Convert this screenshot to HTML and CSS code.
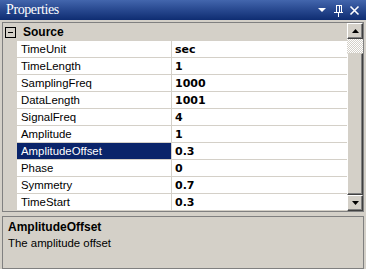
FILE: index.html
```html
<!DOCTYPE html>
<html>
<head>
<meta charset="utf-8">
<link rel="stylesheet" href="styles.css">
</head>
<body>
<div class="window">
  <div class="titlebar">
    <span class="title">Properties</span>
    <div class="tools">
      <svg class="ico" width="10" height="16" viewBox="0 0 10 16"><polygon points="1,6 9,6 5,10" fill="#fff"/></svg>
      <svg class="ico" width="10" height="16" viewBox="0 0 10 16"><path d="M3 3h5M3 3v7M6 3v7M8 3v7M1 10h9M5 10v5" stroke="#fff" stroke-width="1" fill="none" shape-rendering="crispEdges"/></svg>
      <svg class="ico" width="12" height="16" viewBox="0 0 12 16"><path d="M1.5 4.5l8 8M9.5 4.5l-8 8" stroke="#fff" stroke-width="1.6" fill="none"/></svg>
    </div>
  </div>
  <div class="grid">
    <div class="rows">
      <div class="cat">
        <span class="box"><span class="minus"></span></span>
        <span class="catname">Source</span>
      </div>
      <div class="row"><div class="gut"></div><div class="name">TimeUnit</div><div class="val">sec</div></div>
      <div class="row"><div class="gut"></div><div class="name">TimeLength</div><div class="val">1</div></div>
      <div class="row"><div class="gut"></div><div class="name">SamplingFreq</div><div class="val">1000</div></div>
      <div class="row"><div class="gut"></div><div class="name">DataLength</div><div class="val">1001</div></div>
      <div class="row"><div class="gut"></div><div class="name">SignalFreq</div><div class="val">4</div></div>
      <div class="row"><div class="gut"></div><div class="name">Amplitude</div><div class="val">1</div></div>
      <div class="row"><div class="gut"></div><div class="name sel">AmplitudeOffset</div><div class="val">0.3</div></div>
      <div class="row"><div class="gut"></div><div class="name">Phase</div><div class="val">0</div></div>
      <div class="row"><div class="gut"></div><div class="name">Symmetry</div><div class="val">0.7</div></div>
      <div class="row"><div class="gut"></div><div class="name">TimeStart</div><div class="val">0.3</div></div>
    </div>
    <div class="scroll">
      <div class="btn"><svg width="7" height="4" viewBox="0 0 7 4"><polygon points="3.5,0 7,4 0,4" fill="#000"/></svg></div>
      <div class="track"></div>
      <div class="thumb"></div>
      <div class="btn"><svg width="7" height="4" viewBox="0 0 7 4"><polygon points="0,0 7,0 3.5,4" fill="#000"/></svg></div>
    </div>
  </div>
  <div class="desc">
    <div class="dtitle">AmplitudeOffset</div>
    <div class="dtext">The amplitude offset</div>
  </div>
</div>
</body>
</html>
```
FILE: styles.css
```css
html, body {
  margin: 0;
  padding: 0;
  background: #d4d0c8;
}
.window {
  width: 366px;
  height: 269px;
  background: #d4d0c8;
  font-family: "Liberation Sans", Arial, sans-serif;
  font-size: 11.4px;
  color: #000;
  overflow: hidden;
}
.titlebar {
  height: 20px;
  display: flex;
  align-items: center;
  justify-content: space-between;
  background: linear-gradient(to bottom, #4366ad 0%, #2a4b92 45%, #0f2d72 100%);
  padding: 0 5px 0 6px;
}
.title {
  font-family: "Liberation Serif", "Times New Roman", serif;
  font-size: 14px;
  color: #fff;
  letter-spacing: -0.4px;
  line-height: 20px;
}
.tools {
  display: flex;
  align-items: center;
  gap: 6px;
}
.ico { display: block; }
.grid {
  margin: 2px 2px 0 2px;
  height: 188px;
  border: 1px solid #808080;
  display: flex;
  background: #d4d0c8;
}
.rows {
  flex: 1;
  display: flex;
  flex-direction: column;
}
.cat {
  height: 18px;
  display: flex;
  align-items: center;
  background: #d4d0c8;
}
.box {
  width: 9px;
  height: 9px;
  border: 1px solid #000;
  margin-left: 2px;
  margin-right: 7px;
  display: flex;
  align-items: center;
  justify-content: center;
  background: #d4d0c8;
}
.minus {
  width: 5px;
  height: 1px;
  background: #000;
}
.catname {
  font-weight: bold;
  font-size: 12px;
}
.row {
  height: 17px;
  display: flex;
}
.gut {
  width: 14px;
  background: #d4d0c8;
}
.name {
  width: 150px;
  padding-left: 4px;
  background: #fff;
  border-bottom: 1px solid #d4d0c8;
  border-right: 1px solid #d4d0c8;
  line-height: 17px;
  white-space: nowrap;
  overflow: hidden;
}
.name.sel {
  background: #0a246a;
  color: #fff;
}
.val {
  flex: 1;
  padding-left: 3px;
  background: #fff;
  border-bottom: 1px solid #d4d0c8;
  line-height: 17px;
  font-family: "DejaVu Sans", sans-serif;
  font-weight: bold;
  font-size: 11px;
}
.scroll {
  width: 16px;
  display: flex;
  flex-direction: column;
  background: #d4d0c8;
}
.btn {
  height: 16px;
  box-sizing: border-box;
  border: 1px solid;
  border-color: #fff #404040 #404040 #fff;
  box-shadow: inset -1px -1px 0 #808080;
  background: #d4d0c8;
  display: flex;
  align-items: center;
  justify-content: center;
}
.track {
  height: 14px;
  background-color: #fff;
  background-image: conic-gradient(#d4d0c8 25%, #fff 0 50%, #d4d0c8 0 75%, #fff 0);
  background-size: 2px 2px;
}
.thumb {
  flex: 1;
  box-sizing: border-box;
  border: 1px solid;
  border-color: #d4d0c8 #404040 #404040 #fff;
  box-shadow: inset -1px -1px 0 #808080;
  background: #d4d0c8;
}
.desc {
  margin: 4px 2px 0 2px;
  height: 48px;
  border: 1px solid #808080;
  padding: 3px 5px 0 5px;
}
.dtitle {
  font-weight: bold;
  font-size: 12px;
  line-height: 15px;
}
.dtext {
  line-height: 17px;
}
```
